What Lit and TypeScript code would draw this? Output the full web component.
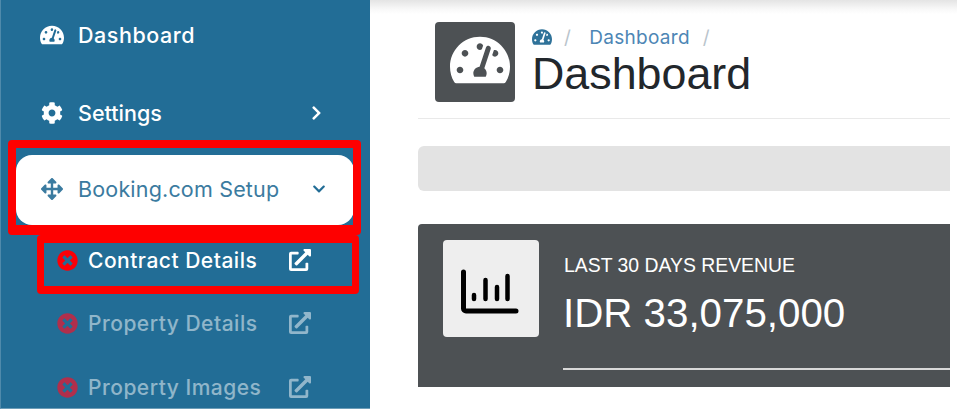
import { LitElement, html, css, svg } from "lit";
import { customElement } from "lit/decorators.js";

const P = {
  gauge: ["0 0 576 512", "M288 32C128.94 32 0 160.94 0 320c0 52.8 14.25 102.26 39.06 144.8 5.61 9.62 16.3 15.2 27.44 15.2h443c11.14 0 21.83-5.58 27.44-15.2C561.75 422.26 576 372.8 576 320c0-159.06-128.94-288-288-288zm0 64c14.71 0 26.58 10.13 30.32 23.65-1.11 2.26-2.64 4.23-3.45 6.67l-9.22 27.67c-5.13 3.49-10.97 6.01-17.64 6.01-17.67 0-32-14.33-32-32S270.33 96 288 96zM96 384c-17.67 0-32-14.33-32-32s14.33-32 32-32 32 14.33 32 32-14.33 32-32 32zm48-160c-17.67 0-32-14.33-32-32s14.33-32 32-32 32 14.33 32 32-14.33 32-32 32zm246.77-72.41l-61.33 184C343.13 347.33 352 364.54 352 384c0 11.72-3.38 22.55-8.88 32H232.88c-5.5-9.45-8.88-20.28-8.88-32 0-33.94 26.5-61.43 59.9-63.59l61.34-184.01c4.17-12.56 17.73-19.45 30.36-15.17 12.57 4.19 19.35 17.79 15.17 30.36zm14.66 57.2l15.52-46.55c3.47-1.29 7.13-2.23 11.05-2.23 17.67 0 32 14.33 32 32s-14.33 32-32 32c-11.38-.01-20.89-6.28-26.57-15.22zM480 384c-17.67 0-32-14.33-32-32s14.33-32 32-32 32 14.33 32 32-14.33 32-32 32z"],
  cog: ["0 0 512 512", "M487.4 315.7l-42.6-24.6c4.3-23.2 4.3-47 0-70.2l42.6-24.6c4.9-2.8 7.1-8.6 5.5-14-11.1-35.6-30-67.8-54.7-94.6-3.8-4.1-10-5.1-14.8-2.3L380.8 110c-17.9-15.4-38.5-27.3-60.8-35.1V25.8c0-5.6-3.9-10.5-9.4-11.7-36.7-8.2-74.3-7.8-109.2 0-5.5 1.2-9.4 6.1-9.4 11.7V75c-22.2 7.9-42.8 19.8-60.8 35.1L88.7 85.5c-4.9-2.8-11-1.9-14.8 2.3-24.7 26.7-43.6 58.9-54.7 94.6-1.7 5.4.6 11.2 5.5 14L67.3 221c-4.3 23.2-4.3 47 0 70.2l-42.6 24.6c-4.9 2.8-7.1 8.6-5.5 14 11.1 35.6 30 67.8 54.7 94.6 3.8 4.1 10 5.1 14.8 2.3l42.6-24.6c17.9 15.4 38.5 27.3 60.8 35.1v49.2c0 5.6 3.9 10.5 9.4 11.7 36.7 8.2 74.3 7.8 109.2 0 5.5-1.2 9.4-6.1 9.4-11.7v-49.2c22.2-7.9 42.8-19.8 60.8-35.1l42.6 24.6c4.9 2.8 11 1.9 14.8-2.3 24.7-26.7 43.6-58.9 54.7-94.6 1.5-5.5-.7-11.3-5.6-14.1zM256 336c-44.1 0-80-35.9-80-80s35.9-80 80-80 80 35.9 80 80-35.9 80-80 80z"],
  move: ["0 0 512 512", "M352.201 425.775l-79.196 79.196c-9.373 9.373-24.568 9.373-33.941 0l-79.196-79.196c-15.119-15.119-4.411-40.971 16.971-40.97h51.162L228 284H127.196v51.162c0 21.382-25.851 32.09-40.971 16.971L7.029 272.937c-9.373-9.373-9.373-24.569 0-33.941L86.225 159.8c15.119-15.119 40.971-4.411 40.971 16.971V228H228V127.196h-51.23c-21.382 0-32.09-25.851-16.971-40.971l79.196-79.196c9.373-9.373 24.568-9.373 33.941 0l79.196 79.196c15.119 15.119 4.411 40.971-16.971 40.971h-51.162V228h100.804v-51.162c0-21.382 25.851-32.09 40.97-16.971l79.196 79.196c9.373 9.373 9.373 24.569 0 33.941L425.773 352.2c-15.119 15.119-40.971 4.411-40.97-16.971V284H284v100.804h51.23c21.382 0 32.09 25.851 16.971 40.971z"],
  times: ["0 0 512 512", "M256 8C119 8 8 119 8 256s111 248 248 248 248-111 248-248S393 8 256 8zm121.6 313.1c4.7 4.7 4.7 12.3 0 17L338 377.6c-4.7 4.7-12.3 4.7-17 0L256 312l-65.1 65.6c-4.7 4.7-12.3 4.7-17 0L134.4 338c-4.7-4.7-4.7-12.3 0-17l65.6-65-65.6-65.1c-4.7-4.7-4.7-12.3 0-17l39.6-39.6c4.7-4.7 12.3-4.7 17 0l65 65.7 65.1-65.6c4.7-4.7 12.3-4.7 17 0l39.6 39.6c4.7 4.7 4.7 12.3 0 17L312 256l65.6 65.1z"],
  ext: ["0 0 512 512", "M432 320h-32a16 16 0 0 0-16 16v112H64V128h144a16 16 0 0 0 16-16V80a16 16 0 0 0-16-16H48A48 48 0 0 0 0 112v352a48 48 0 0 0 48 48h352a48 48 0 0 0 48-48V336a16 16 0 0 0-16-16zM488 0H360c-21.37 0-32.05 25.91-17 41l35.73 35.73L135 320.37a24 24 0 0 0 0 34L157.67 377a24 24 0 0 0 34 0l243.61-243.68L471 169c15 15 41 4.5 41-17V24a24 24 0 0 0-24-24z"],
  right: ["0 0 320 512", "M285.476 272.971L91.132 467.314c-9.373 9.373-24.569 9.373-33.941 0l-22.667-22.667c-9.357-9.357-9.375-24.522-.04-33.901L188.505 256 34.484 101.255c-9.335-9.379-9.317-24.544.04-33.901l22.667-22.667c9.373-9.373 24.569-9.373 33.941 0L285.475 239.03c9.373 9.372 9.373 24.568.001 33.941z"],
  down: ["0 0 448 512", "M207.029 381.476L12.686 187.132c-9.373-9.373-9.373-24.569 0-33.941l22.667-22.667c9.357-9.357 24.522-9.375 33.901-.04L224 284.505l154.745-154.021c9.379-9.335 24.544-9.317 33.901.04l22.667 22.667c9.373 9.373 9.373 24.569 0 33.941L240.971 381.476c-9.373 9.372-24.569 9.372-33.942 0z"],
} as const;

const icon = (k: keyof typeof P, cls: string) =>
  html`<svg class=${cls} viewBox=${P[k][0]} fill="currentColor"><path d=${P[k][1]}></path></svg>`;

@customElement("app-root")
export class AppRoot extends LitElement {
  static styles = css`
    :host {
      display: flex;
      position: relative;
      width: 957px;
      height: 409px;
      overflow: hidden;
      background: #fff;
      font-family: "Liberation Sans", Arial, sans-serif;
    }
    svg { display: block; flex: none; }

    .side {
      width: 370px;
      height: 409px;
      flex: none;
      box-sizing: border-box;
      background: #226d96;
      border-left: 1px solid #4f8aab;
      border-bottom: 1px solid #6b9db8;
      display: flex;
      flex-direction: column;
      font-family: "Inter", "Open Sans", sans-serif;
      font-weight: 500;
      overflow: hidden;
    }
    .item {
      flex: none;
      display: flex;
      align-items: center;
      box-sizing: border-box;
      color: #fff;
      font-size: 21.5px;
    }
    .top { padding-left: 39px; padding-right: 48px; }
    .first { height: 70px; letter-spacing: 0.55px; }
    .second { height: 85px; padding-top: 1px; }
    .ic { width: 24px; height: 22px; margin-right: 14px; }
    .label { flex: 1; white-space: nowrap; }
    .pill {
      height: 70px;
      margin: 0 16px 0 15px;
      padding: 0 28px 2px 24px;
      background: #fff;
      color: #3b7ba0;
      border-radius: 16px;
      font-weight: 400;
      letter-spacing: 0.18px;
    }
    .chev-r { width: 11px; height: 16px; }
    .chev-d { width: 14px; height: 14px; color: #226d96; }
    .sub {
      height: 64px;
      padding-left: 56px;
      padding-right: 59px;
      font-size: 21px;
      letter-spacing: 0.5px;
      color: rgba(255, 255, 255, 0.5);
    }
    .sub.first-sub { height: 62px; margin-top: 4px; color: #fff; }
    .x { width: 21px; height: 21px; margin-right: 10px; color: #b02f4c; }
    .first-sub .x { color: #fb0007; }
    .e { width: 22px; height: 22px; }

    .main {
      flex: 1;
      box-sizing: border-box;
      padding: 22px 7px 0 48px;
      background: linear-gradient(#e4e4e4, #f8f8f8 9px, #fff 14px);
    }
    .head {
      height: 97px;
      box-sizing: border-box;
      padding-left: 17px;
      border-bottom: 1px solid #e9e9e9;
      display: flex;
      gap: 17px;
    }
    .logo {
      width: 80px;
      height: 80px;
      box-sizing: border-box;
      padding: 0 0 4px 10px;
      background: #4d5154;
      border-radius: 4px;
      display: flex;
      align-items: center;
      justify-content: center;
      color: #fff;
    }
    .logo svg { width: 60px; height: 54px; }
    .crumbs {
      display: flex;
      align-items: center;
      height: 28px;
      margin-top: 1px;
      color: #4d86b5;
      font-family: "Inter", sans-serif;
      font-size: 19px;
      letter-spacing: 0.3px;
    }
    .crumbs svg { width: 20px; height: 18px; color: #2f7299; }
    .sep { color: #b9c4cc; margin: 0 18px 0 12px; }
    .crumbs .sep:last-child { margin: 0 0 0 13px; }
    h1 {
      margin: -2px 0 0;
      font: 400 44.8px/48px "Liberation Sans", Arial, sans-serif;
      color: #22272c;
    }
    .bar {
      height: 45px;
      margin-top: 27px;
      background: #e3e3e3;
      border-radius: 6px 0 0 6px;
    }
    .card {
      height: 163px;
      margin-top: 33px;
      box-sizing: border-box;
      padding: 16px 0 0 25px;
      background: #4d5154;
      border-radius: 4px 0 0 0;
      display: flex;
      gap: 24px;
      color: #fff;
    }
    .tile {
      width: 96px;
      height: 97px;
      flex: none;
      background: #eeeeee;
      border-radius: 4px;
      display: flex;
      align-items: center;
      justify-content: center;
    }
    .tile svg { width: 60px; height: 50px; }
    .stat { flex: 1; padding-top: 15px; }
    .cap { font-size: 19.4px; line-height: 20px; white-space: nowrap; padding-left: 1px; }
    .val { font-size: 40.3px; line-height: 46px; margin-top: 16px; white-space: nowrap; }
    .rule { height: 2px; background: #d8d8d8; margin-top: 31px; }

    .mark {
      position: absolute;
      box-sizing: border-box;
      border: solid #fe0000;
      border-radius: 4px;
      pointer-events: none;
    }
    .m1 { left: 8px; top: 140px; width: 353px; height: 95px; border-width: 8px 8px 10px; }
    .m2 { left: 37px; top: 235px; width: 322px; height: 59px; border-width: 8px 7px; }
  `;

  render() {
    return html`
      <nav class="side">
        <div class="item top first">${icon("gauge", "ic")}<span class="label">Dashboard</span></div>
        <div class="item top second">${icon("cog", "ic")}<span class="label">Settings</span>${icon("right", "chev-r")}</div>
        <div class="item pill">${icon("move", "ic")}<span class="label">Booking.com Setup</span>${icon("down", "chev-d")}</div>
        <div class="item sub first-sub">${icon("times", "x")}<span class="label">Contract Details</span>${icon("ext", "e")}</div>
        <div class="item sub">${icon("times", "x")}<span class="label">Property Details</span>${icon("ext", "e")}</div>
        <div class="item sub">${icon("times", "x")}<span class="label">Property Images</span>${icon("ext", "e")}</div>
      </nav>
      <main class="main">
        <header class="head">
          <div class="logo">${icon("gauge", "")}</div>
          <div>
            <div class="crumbs">${icon("gauge", "")}<span class="sep">/</span><span>Dashboard</span><span class="sep">/</span></div>
            <h1>Dashboard</h1>
          </div>
        </header>
        <div class="bar"></div>
        <section class="card">
          <div class="tile">
            <svg viewBox="0 0 60 50" fill="none" stroke="#000" stroke-linecap="round">
              ${svg`<path d="M2.5 8V44.5a2.5 2.5 0 0 0 2.5 2.5h50" stroke-width="5" />
              <path d="M13 31v4M24.5 16v19M36 23v12M46.5 12v23" stroke-width="4.5" />`}
            </svg>
          </div>
          <div class="stat">
            <div class="cap">LAST 30 DAYS REVENUE</div>
            <div class="val">IDR 33,075,000</div>
            <div class="rule"></div>
          </div>
        </section>
      </main>
      <div class="mark m1"></div>
      <div class="mark m2"></div>
    `;
  }
}
